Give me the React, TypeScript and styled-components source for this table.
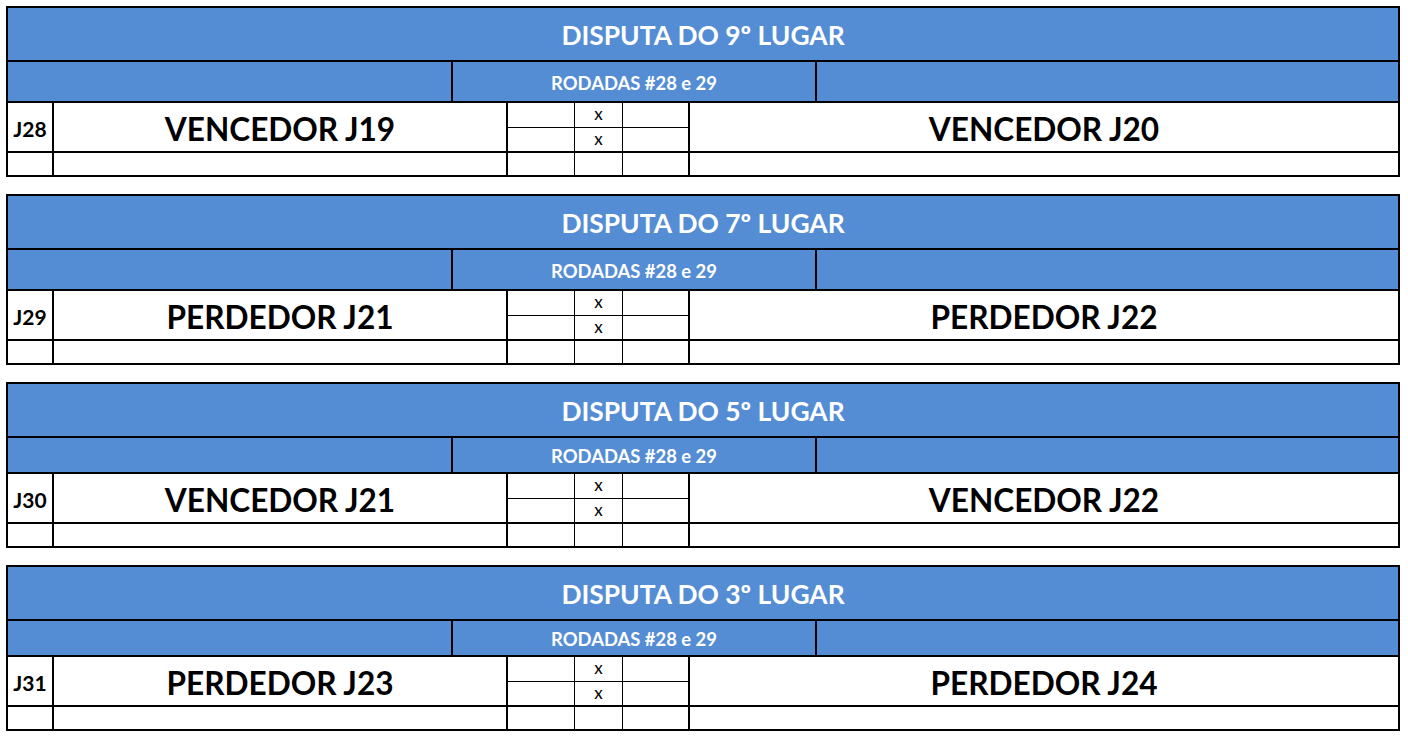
import React from "react";
import styled, { createGlobalStyle } from "styled-components";

const GlobalStyle = createGlobalStyle`
  body {
    margin: 0;
    background: #fff;
    font-family: Lato, "Open Sans", sans-serif;
  }
`;

const BLUE = "#548dd4";

const PageUI = styled.div`
  display: flex;
  flex-direction: column;
  gap: 17px;
  padding: 6px 0 0 6px;
  width: 1394px;
`;

const BlockUI = styled.div`
  border: 2px solid #000;
  display: flex;
  flex-direction: column;
`;

const TitleUI = styled.div`
  height: 54px;
  box-sizing: border-box;
  background: ${BLUE};
  border-bottom: 2px solid #000;
  display: flex;
  align-items: center;
  justify-content: center;
  padding-top: 2px;
  color: #fff;
  font-weight: bold;
  font-size: 26.4px;
`;

const SubRowUI = styled.div<{ $height: number }>`
  display: grid;
  grid-template-columns: 445px 364px 1fr;
  height: ${({ $height }) => $height + 2}px;
  border-bottom: 2px solid #000;
  box-sizing: border-box;
  background: ${BLUE};
`;

const SubCellUI = styled.div<{ $last?: boolean }>`
  border-right: ${({ $last }) => ($last ? "none" : "2px solid #000")};
  display: flex;
  align-items: center;
  justify-content: center;
  padding-top: 2px;
  color: #fff;
  font-weight: bold;
  font-size: 18.4px;
`;

const MatchGridUI = styled.div`
  display: grid;
  grid-template-columns: 46px 454px 67px 48px 67px 1fr;
  grid-template-rows: 50px 22px;
`;

const CellUI = styled.div<{ $right?: number; $bottom?: boolean }>`
  box-sizing: border-box;
  border-right: ${({ $right }) => ($right ? `${$right}px solid #000` : "none")};
  border-bottom: ${({ $bottom }) => ($bottom ? "2px solid #000" : "none")};
  display: flex;
  align-items: center;
  justify-content: center;
`;

const GameLabelUI = styled(CellUI)`
  font-weight: bold;
  font-size: 21px;
  padding-top: 3px;
`;

const TeamUI = styled(CellUI)`
  font-weight: bold;
  font-size: 31.6px;
  padding-top: 4px;
`;

const ScoreUI = styled(CellUI)`
  flex-direction: column;
  align-items: stretch;
`;

const ScoreHalfUI = styled.div<{ $top?: boolean }>`
  flex: ${({ $top }) => ($top ? "0 0 25px" : "1")};
  box-sizing: border-box;
  border-bottom: ${({ $top }) => ($top ? "1px solid #000" : "none")};
  display: flex;
  align-items: center;
  justify-content: center;
  padding-bottom: 3px;
  font-size: 17px;
  line-height: 1;
`;

interface Match {
  title: string;
  game: string;
  home: string;
  away: string;
  subHeight: number;
}

const matches: Match[] = [
  { title: "DISPUTA DO 9º LUGAR", game: "J28", home: "VENCEDOR J19", away: "VENCEDOR J20", subHeight: 39 },
  { title: "DISPUTA DO 7º LUGAR", game: "J29", home: "PERDEDOR J21", away: "PERDEDOR J22", subHeight: 39 },
  { title: "DISPUTA DO 5º LUGAR", game: "J30", home: "VENCEDOR J21", away: "VENCEDOR J22", subHeight: 34 },
  { title: "DISPUTA DO 3º LUGAR", game: "J31", home: "PERDEDOR J23", away: "PERDEDOR J24", subHeight: 34 },
];

function Score({ mark, right }: { mark?: boolean; right: number }): JSX.Element {
  return (
    <ScoreUI $right={right} $bottom>
      <ScoreHalfUI $top>{mark ? "x" : ""}</ScoreHalfUI>
      <ScoreHalfUI>{mark ? "x" : ""}</ScoreHalfUI>
    </ScoreUI>
  );
}

function MatchBlock({ match }: { match: Match }): JSX.Element {
  return (
    <BlockUI>
      <TitleUI>{match.title}</TitleUI>
      <SubRowUI $height={match.subHeight}>
        <SubCellUI />
        <SubCellUI>RODADAS #28 e 29</SubCellUI>
        <SubCellUI $last />
      </SubRowUI>
      <MatchGridUI>
        <GameLabelUI $right={2} $bottom>{match.game}</GameLabelUI>
        <TeamUI $right={2} $bottom>{match.home}</TeamUI>
        <Score right={1} />
        <Score right={1} mark />
        <Score right={2} />
        <TeamUI $bottom>{match.away}</TeamUI>

        <CellUI $right={2} />
        <CellUI $right={2} />
        <CellUI $right={1} />
        <CellUI $right={1} />
        <CellUI $right={2} />
        <CellUI />
      </MatchGridUI>
    </BlockUI>
  );
}

export default function App(): JSX.Element {
  return (
    <>
      <GlobalStyle />
      <PageUI>
        {matches.map((m) => (
          <MatchBlock key={m.game} match={m} />
        ))}
      </PageUI>
    </>
  );
}
